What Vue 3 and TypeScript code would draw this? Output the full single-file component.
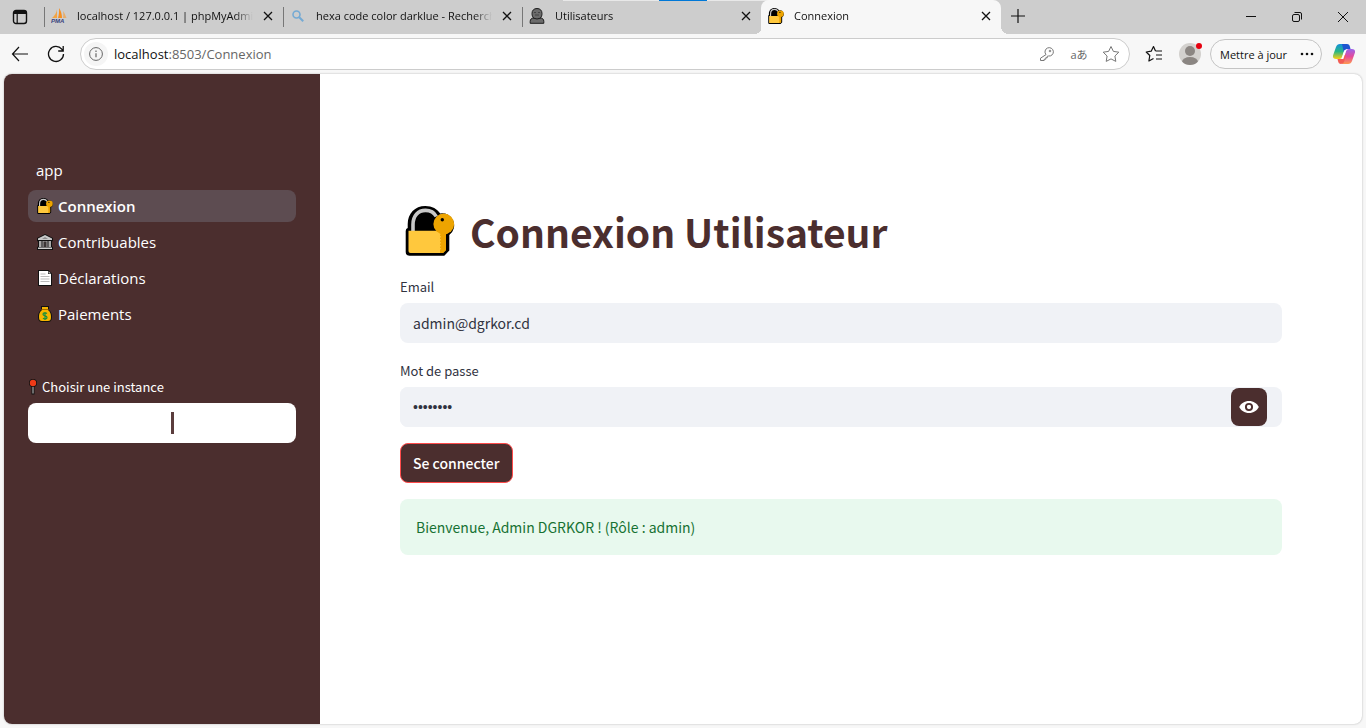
<script setup lang="ts">
import { ref } from 'vue'

interface Tab {
  id: string
  title: string
  active?: boolean
}

interface NavItem {
  icon: string
  label: string
  active?: boolean
}

const tabs: Tab[] = [
  { id: 'pma', title: 'localhost / 127.0.0.1 | phpMyAdmin' },
  { id: 'search', title: 'hexa code color darklue - Recherche' },
  { id: 'user', title: 'Utilisateurs' },
  { id: 'lock', title: 'Connexion', active: true },
]

const navItems: NavItem[] = [
  { icon: '', label: 'app' },
  { icon: 'lock', label: 'Connexion', active: true },
  { icon: 'bank', label: 'Contribuables' },
  { icon: 'page', label: 'Déclarations' },
  { icon: 'money', label: 'Paiements' },
]

const email = ref('admin@dgrkor.cd')
const password = ref('password')
const showPassword = ref(false)
</script>

<template>
  <div class="window">
    <svg class="sprites" aria-hidden="true">
      <symbol id="lock" viewBox="0 0 50 50">
        <path d="M2.7 22V18C2.7 7.500 10 0 20.200 0c7 0 12 3 15 7.500A12 12 0 0 1 44.300 29v15.500l-5 5.200H4.500Q.7 49.700 .7 46V25q0-2.500 2-3z" fill="#000" />
        <path d="M8 25V18.500C8 10 13 4.400 20.500 4.400c5 0 8.800 2.300 10.800 6.100" fill="none" stroke="#c8c8c8" stroke-width="3.600" />
        <path d="M3.500 24.700H41V44l-3 3H5.500q-2 0-2-2z" fill="#ffc83d" />
        <path d="M35 24.700h6V44l-3 3h-3z" fill="#eda400" />
        <path d="M35 27v18" stroke="#ffc83d" stroke-width="1.500" stroke-dasharray="1.500 1.500" />
        <circle cx="38.800" cy="18" r="10.400" fill="#eda400" />
        <circle cx="37.300" cy="13.700" r="1.700" fill="#000" />
      </symbol>
      <symbol id="bank" viewBox="0 0 16 16">
        <path d="M8 0L0 4v3l1 .5v5L0 13v3h16v-3l-1-.5v-5l1-.5V4z" fill="#111" />
        <path d="M8 1L1 4.600V6h14V4.600z" fill="#c9c9c9" />
        <path d="M8 3L5 5h6z" fill="#8c8c8c" />
        <path d="M2 7h2.500v6H2zm3.500 0h5v6h-5zm6 0H14v6h-2.500z" fill="#aaa" />
        <path d="M6.500 7.500h3V13h-3z" fill="#3a3535" />
        <path d="M1 13.500h14V15H1z" fill="#d0d0d0" />
      </symbol>
      <symbol id="page" viewBox="0 0 16 16">
        <path d="M1 0h10.500L15 3.500V16H1z" fill="#111" />
        <path d="M2 1h9v3h3v11H2z" fill="#fff" />
        <path d="M11.500 1v2.500H14z" fill="#bbb" />
        <path d="M3.500 4h5M3.500 6.500h9M3.500 9h9M3.500 11.500h9" stroke="#bbb" />
      </symbol>
      <symbol id="money" viewBox="0 0 16 16">
        <path d="M4 0h8v4c2.500 2 3.200 4.500 3 7.500-.2 3-1.500 4.500-4 4.500H5c-2.500 0-3.800-1.500-4-4.500C.8 8.500 1.500 6 4 4z" fill="#111" />
        <path d="M5 1h6v3c2.500 1.500 3 4.500 3 7 0 3-1 4-3 4H5c-2 0-3-1-3-4 0-2.500.5-5.500 3-7z" fill="#f5b400" />
        <path d="M4.500 3.500h7" stroke="#a66c00" />
        <path d="M10 7.500C9 6.600 6 6.500 6 8.300c0 2 4 1.200 4 3.100 0 1.800-3 1.700-4 .7M8 6v8" fill="none" stroke="#19913b" stroke-width="1.200" />
      </symbol>
      <symbol id="user" viewBox="0 0 16 16">
        <path d="M8 .5c3.200 0 5 2 5 5 0 2-.5 3.200-1.500 4.200 2 .6 3.300 1.600 3.300 3.600v2H1.200v-2c0-2 1.300-3 3.300-3.600C3.500 8.700 3 7.500 3 5.500c0-3 1.800-5 5-5z" fill="#6b6b6b" stroke="#1c1c1c" />
        <path d="M4 10q4 2 8 0" fill="none" stroke="#1c1c1c" />
        <path d="M5 4.500h2M9 4.500h2M6 7h4" stroke="#444" />
      </symbol>
      <symbol id="search" viewBox="0 0 16 16">
        <circle cx="6.500" cy="6.500" r="3.500" fill="none" stroke="#74aad4" stroke-width="1.600" />
        <path d="M9.200 9.200l4 4" stroke="#74aad4" stroke-width="2" />
      </symbol>
      <symbol id="pma" viewBox="0 0 16 16">
        <path d="M6 1.500V10H1C3.500 8 5.500 5 6 1.500z" fill="#f2a445" />
        <path d="M8 0c2 3 3 6.500 3 10H7C8 7 8.300 3 8 0z" fill="#f78e1e" />
        <path d="M12 3c1.500 2 2.500 4.500 3.500 7H12c.4-2 .4-5 0-7z" fill="#e9ad68" />
        <text x="0" y="15" font-size="6" font-weight="700" font-style="italic" font-family="Liberation Sans, sans-serif" fill="#38427d">PMA</text>
      </symbol>
    </svg>

    <div class="handle" aria-hidden="true"></div>

    <header class="tabstrip">
      <button class="plain workspaces" aria-label="Menu des onglets">
        <svg width="16" height="16" viewBox="0 0 16 16">
          <rect x="1.500" y="1.500" width="13" height="13" rx="2.500" fill="none" stroke="#111" stroke-width="1.400" />
          <path d="M1.500 5V4A2.500 2.500 0 0 1 4 1.500h8A2.500 2.500 0 0 1 14.500 4v1z" fill="#111" />
          <path d="M5.200 5v9" stroke="#111" stroke-width="1.200" />
        </svg>
      </button>
      <div v-for="tab in tabs" :key="tab.id" class="tab" :class="{ active: tab.active }">
        <svg class="favicon"><use :href="'#' + tab.id" /></svg>
        <span class="tab-title">{{ tab.title }}</span>
        <button class="plain close" :aria-label="'Fermer ' + tab.title">
          <svg width="10" height="10" viewBox="0 0 10 10"><path d="M1 1l8 8M9 1L1 9" stroke="#111" stroke-width="1.300" /></svg>
        </button>
      </div>
      <button class="plain new-tab" aria-label="Nouvel onglet">
        <svg width="14" height="14" viewBox="0 0 14 14"><path d="M7 0v14M0 7h14" stroke="#111" stroke-width="1.200" /></svg>
      </button>
      <div class="controls">
        <button class="plain" aria-label="Réduire">
          <svg width="10" height="10" viewBox="0 0 10 10"><path d="M0 4.500h10" stroke="#111" /></svg>
        </button>
        <button class="plain" aria-label="Niveau inférieur">
          <svg width="10" height="10" viewBox="0 0 10 10" fill="none" stroke="#111">
            <rect x=".5" y="2.500" width="7" height="7" rx="1.500" />
            <path d="M2.500.5H8A1.500 1.500 0 0 1 9.500 2v5.500" />
          </svg>
        </button>
        <button class="plain" aria-label="Fermer la fenêtre">
          <svg width="10" height="10" viewBox="0 0 10 10"><path d="M0 0l10 10M10 0L0 10" stroke="#111" /></svg>
        </button>
      </div>
    </header>

    <div class="toolbar">
      <button class="plain nav-button" aria-label="Précédent">
        <svg width="18" height="16" viewBox="0 0 18 16" fill="none" stroke="#111" stroke-width="1.200"><path d="M17 8H1.500M8 1L1.500 8 8 15" /></svg>
      </button>
      <button class="plain nav-button" aria-label="Actualiser">
        <svg width="18" height="18" viewBox="0 0 18 18" fill="none" stroke="#111" stroke-width="1.300"><path d="M16.500 9A7.500 7.500 0 1 1 14.800 4.200L16 5.500M16.200 1v5h-5" /></svg>
      </button>
      <div class="address">
        <button class="plain info" aria-label="Informations sur le site">
          <svg width="14" height="14" viewBox="0 0 14 14" fill="none" stroke="#666"><circle cx="7" cy="7" r="6.400" /><path d="M7 6.200v4M7 3.600v1.400" stroke-width="1.200" /></svg>
        </button>
        <p class="url"><span>localhost</span>:8503/Connexion</p>
        <button class="plain address-action" aria-label="Mots de passe">
          <svg width="16" height="16" viewBox="0 0 16 16" fill="none" stroke="#777"><path d="M7 8.600A4.200 4.200 0 1 1 9.500 10L8.300 10.200V11.700H6.800V13.200H5.200V14.500H1.500V12.200z" stroke-linejoin="round" /><circle cx="11" cy="5" r=".8" /></svg>
        </button>
        <button class="plain address-action translate" aria-label="Traduire">aあ</button>
        <button class="plain address-action" aria-label="Ajouter aux favoris">
          <svg width="18" height="18" viewBox="0 0 18 18" fill="none" stroke="#777" stroke-linejoin="round"><path d="M9 1.500l2.400 4.900 5.400.8-3.900 3.800.9 5.400L9 13.900l-4.800 2.500.9-5.400L1.200 7.200l5.400-.8z" /></svg>
        </button>
      </div>
      <button class="plain favorites" aria-label="Favoris">
        <svg width="18" height="18" viewBox="0 0 18 18" fill="none" stroke="#111" stroke-width="1.200" stroke-linejoin="round"><path d="M10.500 6L8.500 1.500 6.200 6.200l-5 .8 3.600 3.500-.9 5.500 4.600-2.500M10.500 6H17M11 10h6M11 14h6" /></svg>
      </button>
      <button class="plain profile" aria-label="Profil">
        <svg width="24" height="24" viewBox="0 0 24 24">
          <clipPath id="disc"><circle cx="12" cy="12" r="11" /></clipPath>
          <circle cx="12" cy="12" r="11" fill="#d3d1ce" />
          <circle cx="12" cy="9" r="5" fill="#8b8682" />
          <ellipse cx="12" cy="20" rx="8" ry="5" fill="#8b8682" clip-path="url(#disc)" />
          <circle cx="21" cy="4" r="3" fill="#e6000f" />
        </svg>
      </button>
      <button class="update">
        <span>Mettre à jour</span>
        <svg width="14" height="4" viewBox="0 0 14 4" fill="#111"><circle cx="2" cy="2" r="1.300" /><circle cx="7" cy="2" r="1.300" /><circle cx="12" cy="2" r="1.300" /></svg>
      </button>
      <button class="plain copilot" aria-label="Copilot">
        <svg width="22" height="20" viewBox="0 0 22 20">
          <defs>
            <linearGradient id="cool" x1="0" y1="0" x2="0" y2="1"><stop offset="0" stop-color="#128fdc" /><stop offset=".5" stop-color="#29b784" /><stop offset="1" stop-color="#ffcf13" /></linearGradient>
            <linearGradient id="warm" x1="0" y1="0" x2="0" y2="1"><stop offset="0" stop-color="#9a63ec" /><stop offset=".5" stop-color="#e44a9b" /><stop offset="1" stop-color="#ff9a4f" /></linearGradient>
          </defs>
          <path d="M7 0h6l-3.800 12.500Q8.400 15 6.500 15H3q-4 0-2.800-4L3 3q1-3 4-3z" fill="url(#cool)" />
          <path d="M9 0h5q2.500 0 3 3l.5 2h-3.700q-1.500 0-2 1.500L11 9z" fill="#1d55cf" />
          <path d="M15.500 5H19q4 0 2.800 4L19 17q-1 3-4 3H9l3.800-12.500Q13.600 5 15.500 5z" fill="url(#warm)" />
          <path d="M4.500 15h3.700q1.500 0 2-1.500L11 11l2 0-2 7q-.7 2-3 2-2.500 0-3-3z" fill="#f25c54" />
          <path d="M11.500 6h1.800l-3 9H8.700z" fill="#fff" />
        </svg>
      </button>
    </div>

    <div class="page">
      <aside class="sidebar">
        <nav>
          <a v-for="item in navItems" :key="item.label" href="#" class="nav-item" :class="{ active: item.active }">
            <svg v-if="item.icon" class="nav-icon"><use :href="'#' + item.icon" /></svg>
            <span>{{ item.label }}</span>
          </a>
        </nav>
        <div class="instance">
          <label for="instance">
            <svg width="10" height="16" viewBox="0 0 10 16"><path d="M3.500 6h3v9.500h-3z" fill="#111" /><path d="M5 7v7.500" stroke="#c9c9c9" /><circle cx="5" cy="4" r="4" fill="#111" /><circle cx="5" cy="4" r="3.200" fill="#f03a17" /></svg>
            <span>Choisir une instance</span>
          </label>
          <select id="instance"><option></option></select>
        </div>
      </aside>
      <main>
        <h1>
          <svg class="title-icon"><use href="#lock" /></svg>
          <span>Connexion Utilisateur</span>
        </h1>
        <form @submit.prevent>
          <div class="field">
            <label for="email">Email</label>
            <input id="email" v-model="email" type="text">
          </div>
          <div class="field">
            <label for="password">Mot de passe</label>
            <div class="password-box">
              <input id="password" v-model="password" :type="showPassword ? 'text' : 'password'">
              <button type="button" class="reveal" aria-label="Afficher le mot de passe" @click="showPassword = !showPassword">
                <svg width="20" height="14" viewBox="0 0 20 14"><path d="M10 1C5.500 1 2 3.500.2 7 2 10.500 5.500 13 10 13s8-2.500 9.800-6C18 3.500 14.500 1 10 1z" fill="#fff" /><circle cx="10" cy="7" r="3.100" fill="#fff" stroke="#4b2e2e" stroke-width="1.900" /></svg>
              </button>
            </div>
          </div>
          <button class="submit">Se connecter</button>
        </form>
        <p class="alert" role="status">Bienvenue, Admin DGRKOR ! (Rôle : admin)</p>
      </main>
    </div>
  </div>
</template>

<style>
body {
  margin: 0;
}
</style>

<style scoped>
* {
  box-sizing: border-box;
}

.window {
  display: flex;
  flex-direction: column;
  min-height: 100vh;
  background: #f7f7f7;
  color: #111;
  font-family: "Open Sans", "Noto Sans", sans-serif;
  font-size: 11px;
}

svg {
  display: block;
  flex: none;
}

.sprites {
  position: absolute;
  width: 0;
  height: 0;
}

.plain {
  display: flex;
  align-items: center;
  justify-content: center;
  flex: none;
  padding: 0;
  border: 0;
  background: none;
  color: inherit;
  font: inherit;
}

.handle {
  position: absolute;
  top: 0;
  left: 50%;
  width: 240px;
  height: 1px;
  margin-left: -120px;
  background: linear-gradient(90deg, #e8e8e8 40%, #0078d7 40% 60%, #e8e8e8 60%);
}

.tabstrip {
  display: flex;
  height: 34px;
  background: #cdcdcd;
}

.workspaces {
  width: 44px;
  padding-right: 4px;
}

.tab {
  display: flex;
  align-items: center;
  flex: 0 1 239px;
  min-width: 0;
  padding: 0 8px 2px 6px;
  border-left: 1px solid transparent;
  background: linear-gradient(#777, #777) left 7px / 1px 20px no-repeat;
  background-origin: border-box;
}

.tab.active {
  position: relative;
  flex-basis: 240px;
  border-radius: 8px 8px 0 0;
  background: #f7f7f7;
}

.tab.active::before,
.tab.active::after {
  content: "";
  position: absolute;
  bottom: 0;
  width: 8px;
  height: 8px;
}

.tab.active::before {
  right: 100%;
  background: radial-gradient(circle at 0 0, transparent 8px, #f7f7f7 8px);
}

.tab.active::after {
  left: 100%;
  background: radial-gradient(circle at 100% 0, transparent 8px, #f7f7f7 8px);
}

.favicon {
  width: 16px;
  height: 16px;
  margin-right: 10px;
}

.tab-title {
  flex: 1;
  min-width: 0;
  overflow: hidden;
  line-height: 18px;
  white-space: nowrap;
  mask-image: linear-gradient(90deg, #000 calc(100% - 18px), transparent);
}

.close {
  width: 14px;
  height: 16px;
  margin-left: 8px;
}

.new-tab {
  width: 34px;
  padding-bottom: 2px;
}

.controls {
  display: flex;
  margin-left: auto;
}

.controls button {
  width: 46px;
}

.toolbar {
  display: flex;
  align-items: center;
  height: 40px;
  padding-left: 2px;
}

.nav-button {
  width: 36px;
  height: 32px;
}

.address {
  display: flex;
  align-items: center;
  flex: 1;
  min-width: 0;
  height: 32px;
  margin-left: 6px;
  padding: 0 2px 0 3px;
  border: 1px solid #ccc;
  border-radius: 16px;
  background: #fff;
}

.info {
  width: 24px;
  height: 24px;
  border-radius: 12px;
  background: #f5f5f5;
}

.url {
  flex: 1;
  min-width: 0;
  margin: 0 0 0 6px;
  color: #666;
  font-size: 13px;
  line-height: 20px;
}

.url span {
  color: #111;
}

.address-action {
  width: 32px;
  height: 28px;
}

.translate {
  color: #666;
  font-family: "Open Sans", "Noto Sans CJK JP", sans-serif;
  font-size: 11px;
}

.favorites {
  width: 36px;
  margin-left: 6px;
}

.profile {
  width: 36px;
}

.update {
  display: flex;
  align-items: center;
  justify-content: space-between;
  flex: none;
  width: 112px;
  height: 30px;
  margin-left: 2px;
  padding: 0 7px 0 9px;
  border: 1px solid #c4c4c4;
  border-radius: 15px;
  background: #f9f9f9;
  color: #111;
  font: inherit;
}

.copilot {
  width: 44px;
}

.page {
  display: flex;
  flex: 1;
  margin: 0 4px 4px;
  overflow: hidden;
  border-radius: 8px;
  background: #fff;
  box-shadow: 0 0 2px #aaa;
}

.sidebar {
  flex: none;
  width: 316px;
  padding: 80px 24px 24px;
  background: #4b2e2e;
  color: #fff;
}

nav {
  display: flex;
  flex-direction: column;
  gap: 4px;
}

.nav-item {
  display: flex;
  align-items: center;
  gap: 4px;
  height: 32px;
  padding: 0 8px;
  border-radius: 8px;
  color: #fff;
  font-size: 15px;
  line-height: 24px;
  text-decoration: none;
}

.nav-item.active {
  background: #5d4c51;
  font-weight: 600;
}

.nav-icon {
  width: 18px;
  height: 16px;
}

.instance {
  margin-top: 45px;
}

.instance label,
.field label {
  display: flex;
  align-items: center;
  height: 24px;
  margin-bottom: 4px;
  font-family: "Noto Sans CJK SC", sans-serif;
  font-size: 13px;
  line-height: 24px;
}

.instance label {
  gap: 4px;
}

select {
  display: block;
  width: 100%;
  height: 40px;
  border: 0;
  border-radius: 8px;
  appearance: none;
  background: linear-gradient(#5b3d3d, #5b3d3d) calc(50% + 10px) center / 3px 22px no-repeat #fff;
}

main {
  flex: 1;
  min-width: 0;
  padding: 125px 80px 24px;
  color: #31333f;
  font-family: "Noto Sans CJK SC", sans-serif;
  font-size: 14px;
}

h1 {
  display: flex;
  align-items: center;
  gap: 15px;
  height: 64px;
  margin: 0 0 12px;
  padding-left: 5px;
  color: #4b2e2e;
  font-size: 39px;
  font-weight: 700;
  line-height: 64px;
}

.title-icon {
  width: 50px;
  height: 50px;
}

form {
  display: flex;
  flex-direction: column;
  align-items: flex-start;
  gap: 16px;
}

.field {
  width: 100%;
}

input {
  display: block;
  width: 100%;
  height: 40px;
  padding: 0 13px;
  border: 0;
  border-radius: 8px;
  background: #f0f2f6;
  color: #31333f;
  font: inherit;
}

input[type="password"] {
  font-family: "Liberation Sans", sans-serif;
}

.password-box {
  display: flex;
  align-items: center;
  padding-right: 15px;
  border-radius: 8px;
  background: #f0f2f6;
}

.reveal {
  display: flex;
  align-items: center;
  justify-content: center;
  flex: none;
  width: 36px;
  height: 38px;
  padding: 0;
  border: 0;
  border-radius: 8px;
  background: #4b2e2e;
}

.submit {
  height: 40px;
  padding: 0 12px;
  border: 1px solid #ff4b4b;
  border-radius: 8px;
  background: #4b2e2e;
  color: #fff;
  font: inherit;
  font-weight: 500;
}

.alert {
  margin: 16px 0 0;
  padding: 16px;
  border-radius: 8px;
  background: #e8f9ee;
  color: #177233;
  line-height: 24px;
}
</style>
